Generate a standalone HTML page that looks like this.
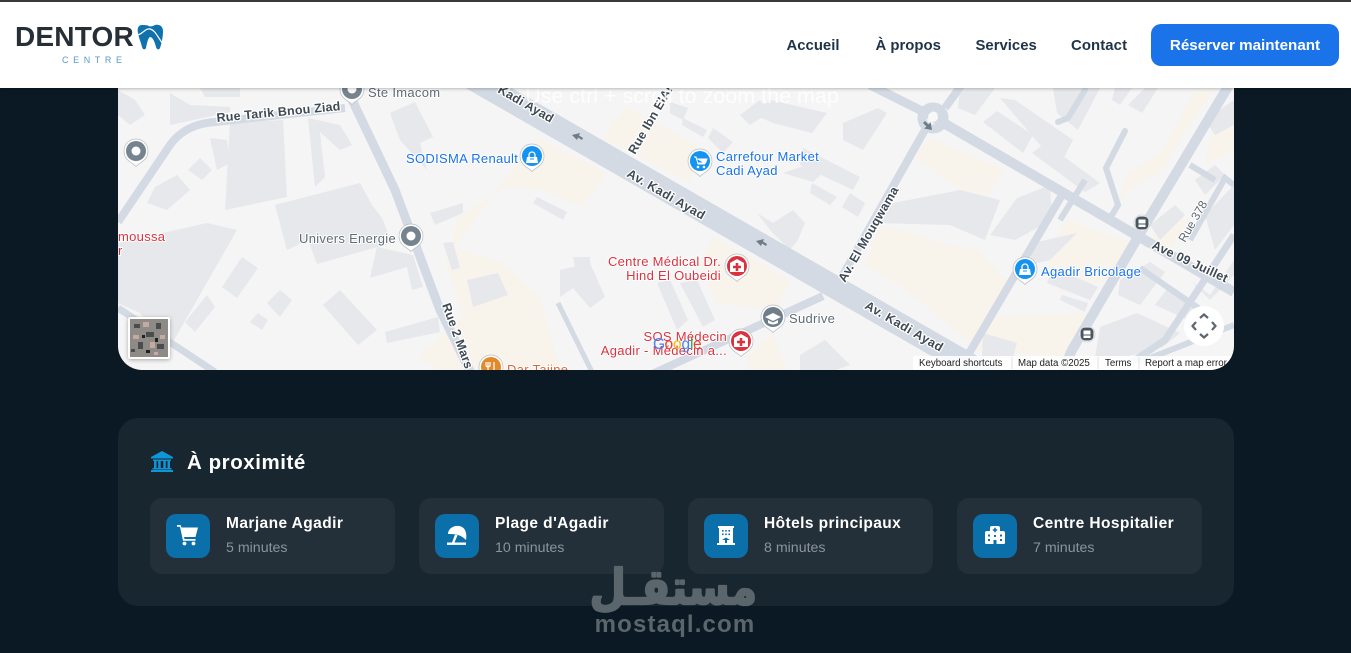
<!DOCTYPE html>
<html lang="fr"><head><meta charset="utf-8"><title>Dentor Centre</title>
<style>
*{box-sizing:border-box;margin:0;padding:0}
html,body{width:1351px;height:653px;overflow:hidden;background:#0a1923;font-family:"Liberation Sans",sans-serif}
.abs{position:absolute}
header{position:absolute;left:0;top:0;width:1351px;height:88px;background:#fff;border-top:2px solid #3a3a3a;box-shadow:0 1px 3px rgba(0,0,0,.25);z-index:5}
.nav{position:absolute;top:35.5px;font-size:14.9px;font-weight:700;color:#1e3448;white-space:nowrap;line-height:17px;height:17px;margin-top:0}
.btn{position:absolute;top:22px;width:188px;height:42px;background:#1a73e8;border-radius:10px;color:#fff;font-size:15.2px;font-weight:700;text-align:center;line-height:44px}
#map{position:absolute;left:118px;top:60px;width:1116px;height:310px;border-radius:0 0 24px 24px;overflow:hidden;background:#f5f5f5}
#map svg{position:absolute;left:0;top:0}
.card{position:absolute;left:118px;top:418px;width:1116px;height:188px;background:#17262f;border-radius:20px}
.item{position:absolute;top:498px;width:245px;height:76px;background:#232f39;border-radius:12px}
.ib{position:absolute;left:16px;top:16px;width:44px;height:44px;background:#0b6fa9;border-radius:10px}
.ib svg{position:absolute;left:0;top:-1.5px}
.t{position:absolute;left:76px;top:17px;color:#fff;font-size:15.5px;font-weight:700;white-space:nowrap;letter-spacing:.42px}
.s{position:absolute;left:76px;top:42px;color:#8b949b;font-size:14.2px;white-space:nowrap}
.h{position:absolute;left:187px;top:451px;color:#fff;font-size:20.5px;font-weight:700;white-space:nowrap;letter-spacing:.55px}
.mark{position:absolute;color:#5b666c;white-space:nowrap;text-align:center}
</style></head><body>

<div id="map">
<svg width="1116" height="310" viewBox="118 60 1116 310" font-family="Liberation Sans, sans-serif">
<!-- beige zones -->
<g fill="#f8f4ec">
<polygon points="537,137 607,173 583,207 543,190 507,187 457,217 452,247 502,263 540,297 560,370 440,370 418,357 463,317 445,260"/>
<polygon points="627,107 700,147 690,182 640,157 603,140 613,122"/>
<polygon points="713,237 790,280 777,310 717,303 700,265"/>
<polygon points="747,357 773,333 787,370 750,370"/>
<polygon points="915,157 930,138 1005,170 980,203"/>
<polygon points="880,225 920,235 950,245 978,250 1013,287 970,343 900,285 865,265"/>
<polygon points="1067,220 1133,243 1107,280 1060,293 1045,255"/>
<polygon points="993,317 1090,313 1067,357 973,350"/>
<polygon points="1193,93 1215,88 1180,140 1163,170 1130,190 1117,205 1127,175 1163,150"/>
<polygon points="1212,130 1234,125 1234,150 1205,165"/>
<polygon points="1165,215 1190,220 1170,250 1150,240"/>
</g>
<!-- buildings -->
<g fill="#e6e8ec">
<polygon points="118,243 207,223 237,230 170,347 140,313 118,303"/>
<polygon points="242,257 258,268 237,298 222,287"/>
<polygon points="207,295 215,307 195,332 185,322"/>
<polygon points="340,290 377,330 358,345 323,305"/>
<polygon points="385,332 438,317 440,332 387,343"/>
<polygon points="275,205 360,183 372,205 382,218 392,243 317,264 308,240 287,250"/>
<polygon points="467,280 498,273 508,295 473,307"/>
<polygon points="267,303 280,290 292,300 280,317"/>
<polygon points="258,313 268,320 262,330 250,322"/>
<polygon points="443,243 453,242 460,268 452,270"/>
<polygon points="377,247 413,255 423,287 412,290 407,267 370,278"/>
<polygon points="430,213 463,203 463,213 435,225"/>
<polygon points="230,123 283,120 287,197 225,210"/>
<polygon points="308,118 340,125 352,145 340,150 320,132 325,177 315,187"/>
<polygon points="390,113 415,102 433,137 420,143 427,170 400,140"/>
<polygon points="155,187 177,175 190,190 167,210 147,203"/>
<polygon points="188,170 200,158 212,170 202,180"/>
<polygon points="210,138 227,140 230,163 217,170"/>
<polygon points="118,90 135,100 145,115 130,125 118,115"/>
<polygon points="170,93 190,105 230,107 230,112 170,125"/>
<polygon points="200,88 240,88 240,97 205,97"/>
<polygon points="560,270 590,263 605,297 590,308 573,288 560,297"/>
<polygon points="573,257 590,257 590,265 575,267"/>
<polygon points="657,283 670,280 688,320 677,330"/>
<polygon points="680,283 697,280 715,320 703,327"/>
<polygon points="757,213 773,223 793,210 805,223 798,240 790,250 770,230"/>
<polygon points="877,223 893,203 960,190 1000,200 985,240 950,225"/>
<polygon points="843,123 878,108 887,113 863,150 843,140"/>
<polygon points="770,100 827,113 812,133 773,123 750,113"/>
<polygon points="683,118 707,130 703,137 682,125"/>
<polygon points="713,128 733,142 723,153 708,138"/>
<polygon points="670,102 688,108 683,120 670,113"/>
<polygon points="803,148 860,177 853,190 800,165"/>
<polygon points="783,173 813,163 823,173 813,182"/>
<polygon points="812,183 837,197 830,205 810,193"/>
<polygon points="850,193 865,203 858,217 842,207"/>
<polygon points="537,197 567,212 563,220 533,203"/>
<polygon points="740,115 760,100 770,112 750,125"/>
<polygon points="960,88 995,88 975,115 958,108"/>
<polygon points="983,122 997,111 1033,135 1023,153"/>
<polygon points="1000,98 1015,100 1073,140 1060,165 1040,145"/>
<polygon points="1032,153 1045,143 1100,183 1085,192"/>
<polygon points="1053,88 1100,88 1078,130 1057,113"/>
<polygon points="1115,88 1132,88 1120,105 1112,100"/>
<polygon points="1145,88 1158,88 1142,113 1128,105"/>
<polygon points="1017,198 1050,185 1052,220 1015,240 990,235"/>
<polygon points="1033,243 1077,233 1050,260 1030,265"/>
<polygon points="1053,267 1098,287 1090,300 1047,283"/>
<polygon points="1062,295 1088,303 1085,312 1060,300"/>
<polygon points="983,333 1017,343 1013,357 982,357"/>
<polygon points="1100,327 1137,313 1180,333 1163,347 1125,357 1095,357"/>
<polygon points="1120,280 1150,262 1165,272 1140,305 1118,295"/>
<polygon points="1170,285 1200,305 1188,320 1155,305"/>
<polygon points="1150,225 1175,205 1185,215 1160,240"/>
<polygon points="1205,120 1234,100 1234,125 1215,135"/>
<polygon points="1195,180 1215,165 1225,175 1205,195"/>
<polygon points="1205,215 1234,185 1234,225 1215,250"/>
<polygon points="1190,280 1210,295 1234,260 1234,275 1210,300"/>
<polygon points="800,355 825,340 850,365 830,372 800,372"/>
</g>
<!-- roads -->
<g fill="none" stroke="#d3dae3" stroke-linecap="butt">
<path d="M440,60 L1010,388" stroke-width="23"/>
<path d="M935,118 L1234,292" stroke-width="10"/>
<path d="M930,115 L870,85" stroke-width="9"/>
<path d="M945,108 L965,80" stroke-width="8"/>
<path d="M926,128 L840,280" stroke-width="8"/>
<circle cx="933" cy="118" r="11" stroke-width="9"/>
<path d="M345,85 L395,190 L440,310 L472,375" stroke-width="9"/>
<path d="M345,108 L215,122 Q185,124 170,145 L118,222" stroke-width="8"/>
<path d="M118,308 L215,372" stroke-width="7"/>
<path d="M1232,80 L1145,225 L1072,350 L1062,372" stroke-width="10"/>
<path d="M1062,195 L968,355" stroke-width="8"/>
<path d="M1125,131 L1106,168 L1118,205 L1112,215" stroke-width="6" stroke-linecap="round"/>
<path d="M1058,122 L1068,118 L1085,90" stroke-width="6" stroke-linecap="round"/>
<path d="M1234,235 L1165,340 L1120,370" stroke-width="7"/>
<path d="M1140,268 L1215,320" stroke-width="6"/>
<path d="M1190,165 L1215,180" stroke-width="6"/>
<path d="M1234,185 L1225,178 L1190,240" stroke-width="6"/>
<path d="M1234,325 L1140,362" stroke-width="6"/>
<path d="M823,296 L650,375" stroke-width="8"/>
<path d="M558,303 L592,372" stroke-width="5"/>
<path d="M1085,180 L1060,220" stroke-width="6"/>
</g>
<circle cx="933" cy="117" r="5" fill="#f8f8f8"/>
<!-- arrows -->
<g fill="#6f7b85">
<path d="M572,135 L580,133 L579,135.500 L583,138 L582,140 L578,137.500 L577,140Z"/>
<path d="M756,241 L764,239 L763,241.500 L767,244 L766,246 L762,243.500 L761,246Z"/>
<path d="M932,130 L924,128.500 L926.500,126.500 L923,123 L925,121 L928.500,124.500 L930.500,122Z"/>
</g>
<!-- road labels -->
<g font-size="12.500" font-weight="700" fill="#3f4a55" stroke="#fff" stroke-width="2.500" paint-order="stroke" stroke-linejoin="round" style="letter-spacing:.2px">
<text transform="translate(217,122) rotate(-5.500)">Rue Tarik Bnou Ziad</text>
<text transform="translate(497,92) rotate(30)">Kadi Ayad</text>
<text transform="translate(635,155) rotate(-60)">Rue Ibn ElAi</text>
<text transform="translate(626,176) rotate(30)" style="letter-spacing:.5px">Av. Kadi Ayad</text>
<text transform="translate(845,283) rotate(-60)">Av. El Mouqwama</text>
<text transform="translate(864,308) rotate(30)" style="letter-spacing:.5px">Av. Kadi Ayad</text>
<text transform="translate(442,305) rotate(70)">Rue 2 Mars</text>
<text transform="translate(1151,248) rotate(25)">Ave 09 Juillet</text>
</g>
<text transform="translate(1185,243) rotate(-60)" font-size="12" fill="#5f6a73" stroke="#fff" stroke-width="2" paint-order="stroke">Rue 378</text>
<!-- POI labels -->
<g font-size="13" stroke="#fff" stroke-width="2" paint-order="stroke" stroke-linejoin="round" style="letter-spacing:.3px">
<text x="368" y="97" fill="#5f6b76">Ste Imacom</text>
<text x="406" y="163" fill="#1a73e8">SODISMA Renault</text>
<text x="716" y="161" fill="#1a73e8">Carrefour Market</text>
<text x="716" y="175" fill="#1a73e8">Cadi Ayad</text>
<text x="299" y="243" fill="#5f6b76">Univers Energie</text>
<text x="118" y="241" fill="#d9333f">moussa</text>
<text x="118" y="255" fill="#d9333f">r</text>
<text x="721" y="266" text-anchor="end" fill="#d9333f">Centre Médical Dr.</text>
<text x="721" y="280" text-anchor="end" fill="#d9333f">Hind El Oubeidi</text>
<text x="789" y="323" fill="#5f6b76">Sudrive</text>
<text x="727" y="341" text-anchor="end" fill="#d9333f">SOS Médecin</text>
<text x="727" y="355" text-anchor="end" fill="#d9333f">Agadir - Médecin a...</text>
<text x="1041" y="276" fill="#1a73e8">Agadir Bricolage</text>
<text x="507" y="374" fill="#d9663a">Dar Tajine</text>
</g>
<!-- Pins -->
<defs>
<g id="pin"><path d="M0,14.500 C-3,10.500 -12,9 -12,-1 A12,12 0 1 1 12,-1 C12,9 3,10.500 0,14.500Z" fill="#fff" stroke="#b9bdc2" stroke-width=".7"/><circle cx="0" cy="-1" r="10" fill="currentColor"/></g>
<g id="bag"><path d="M-5,-1 H5 L6,5 H-6Z" fill="#fff"/><path d="M-3,-1 V-3 A3,3 0 0 1 3,-3 V-1" fill="none" stroke="#fff" stroke-width="1.300"/><path d="M-2,1 H2" stroke="currentColor" stroke-width="1"/></g>
<g id="med"><path d="M0,-7 L7,-3 V6 H-7 V-3Z" fill="#fff"/><path d="M-1.300,-3 H1.300 V-.3 H4 V2.300 H1.300 V5 H-1.300 V2.300 H-4 V-.3 H-1.300Z" fill="#d9333f"/></g>
</defs>
<g color="#76848f"><use href="#pin" x="352" y="90"/><circle cx="352" cy="89" r="4.500" fill="#fff"/>
<use href="#pin" x="136" y="152"/><circle cx="136" cy="151" r="4.500" fill="#fff"/>
<use href="#pin" x="411" y="237"/><circle cx="411" cy="236" r="4.500" fill="#fff"/></g>
<g color="#1493f0"><use href="#pin" x="532" y="157"/><use href="#bag" x="532" y="158"/>
<use href="#pin" x="700" y="162"/><path d="M694,157 H696 L698,164 H705 M697,159 H707 L705.500,163 H698" fill="#fff" stroke="#fff" stroke-width="1"/><circle cx="698" cy="167" r="1.300" fill="#fff"/><circle cx="704" cy="167" r="1.300" fill="#fff"/>
<use href="#pin" x="1025" y="270"/><use href="#bag" x="1025" y="270"/></g>
<g color="#d9333f"><use href="#pin" x="737" y="267"/><use href="#med" x="737" y="266"/>
<use href="#pin" x="741" y="342"/><use href="#med" x="741" y="341"/></g>
<g color="#6e7e8b"><use href="#pin" x="773" y="318"/><path d="M765,317 L773,313 L781,317 L773,321Z M768,320 V323 Q773,326 778,323 V320 L773,322.500Z" fill="#fff"/></g>
<g color="#e08a2c"><use href="#pin" x="491" y="368"/><path d="M488,362 V372 M486,362 V366 Q488,368 490,366 V362 M494,362 V372" stroke="#fff" stroke-width="1.200" fill="none"/></g>
<!-- transit -->
<g>
<circle cx="1142" cy="223" r="8" fill="#fff" stroke="#d5d8dc"/><rect x="1135.500" y="216.500" width="13" height="13" rx="4.500" fill="#4a5661"/><rect x="1138.500" y="219.500" width="7" height="4" fill="#fff"/><rect x="1138.500" y="224.500" width="7" height="2.500" fill="#fff"/>
<circle cx="1087" cy="334" r="8" fill="#fff" stroke="#d5d8dc"/><rect x="1080.500" y="327.500" width="13" height="13" rx="4.500" fill="#4a5661"/><rect x="1083.500" y="330.500" width="7" height="4" fill="#fff"/><rect x="1083.500" y="335.500" width="7" height="2.500" fill="#fff"/>
</g>
<!-- google logo -->
<g font-size="15.500" font-weight="400">
<text x="653" y="349" fill="#4285f4">G</text><text x="664.500" y="349" fill="#ea4335">o</text><text x="673" y="349" fill="#fbbc05">o</text><text x="681.500" y="349" fill="#4285f4">g</text><text x="690" y="349" fill="#34a853">l</text><text x="693" y="349" fill="#ea4335">e</text>
</g>
<!-- satellite tile -->
<rect x="128" y="317" width="42" height="42" rx="2" fill="#fff" style="filter:drop-shadow(0 1px 2px rgba(0,0,0,.3))"/>
<rect x="130" y="319" width="38" height="38" fill="#8e8a85"/>
<g fill="#4b4c4f"><rect x="134" y="324" width="6" height="4"/><rect x="146" y="332" width="8" height="5"/><rect x="138" y="342" width="5" height="7"/><rect x="156" y="323" width="5" height="6"/><rect x="157" y="344" width="7" height="5"/><rect x="131" y="349" width="4" height="3"/></g>
<g fill="#c5aaa3"><rect x="143" y="322" width="6" height="5"/><rect x="133" y="335" width="6" height="4"/><rect x="150" y="342" width="5" height="6"/><rect x="160" y="335" width="5" height="4"/><rect x="154" y="352" width="4" height="3"/></g>
<g fill="#1f2124"><rect x="142" y="335" width="3" height="3"/><rect x="155" y="338" width="3" height="4"/><rect x="146" y="350" width="4" height="3"/></g>
<!-- fullscreen -->
<circle cx="1204" cy="326" r="20" fill="#fff"/>
<g fill="none" stroke="#5f666d" stroke-width="2.200"><path d="M1200,318 L1204,314.500 L1208,318"/><path d="M1200,334 L1204,337.500 L1208,334"/><path d="M1196,322 L1192.500,326 L1196,330"/><path d="M1212,322 L1215.500,326 L1212,330"/></g>
<!-- attribution -->
<rect x="913" y="356" width="321" height="14" fill="#fff" opacity=".85"/>
<g font-size="9.700" fill="#222">
<text x="919" y="366">Keyboard shortcuts</text>
<text x="1018" y="366">Map data ©2025</text>
<text x="1105" y="366">Terms</text>
<text x="1145" y="366">Report a map error</text>
</g>
<g stroke="#e3e3e3"><path d="M1012,357V369M1098,357V369M1139,357V369"/></g>
<!-- overlay message -->
<text x="682" y="103" text-anchor="middle" font-size="21.500" fill="#fff" opacity=".85">Use ctrl + scroll to zoom the map</text>
</svg>
</div>

<header>
<div class="abs" style="left:15px;top:20px;font-size:28px;font-weight:700;color:#262f36;letter-spacing:.2px;line-height:30px;white-space:nowrap">DENTOR</div>
<svg class="abs" style="left:137px;top:22px" width="27" height="27" viewBox="0 0 27 27">
<path d="M5,1 C1,1 0,5 1,9 C2,15 4,18 5,23 C6,26 8,26 9,24 C10,19 11,14 13,13 C16,13 18,19 19,23 C20,26 22,26 23,24 C25,18 26,12 26,7 C26,2 22,0 18,1 C16,2 14,3 12,2 C10,1 7,1 5,1Z" fill="#0f72ad"/>
<path d="M0,11 C5,11 8,4 13,5 C18,6 20,12 26,20" fill="none" stroke="#fff" stroke-width="1.200"/>
</svg>
<div class="abs" style="left:62px;top:53px;font-size:9px;color:#5a9ac6;letter-spacing:4.600px;white-space:nowrap">CENTRE</div>
<div class="nav" style="left:786.500px">Accueil</div>
<div class="nav" style="left:875.500px">À propos</div>
<div class="nav" style="left:975.500px">Services</div>
<div class="nav" style="left:1071px;letter-spacing:.1px">Contact</div>
<div class="btn" style="left:1151px">Réserver maintenant</div>
</header>

<div class="card"></div>
<svg class="abs" style="left:151px;top:451px" width="22" height="21" viewBox="0 0 22 21" fill="#0f96d6">
<path d="M11,0 L22,6 V7.500 H0 V6Z"/><rect x="2" y="8.500" width="18" height="1.500"/>
<rect x="3" y="10" width="2.500" height="7"/><rect x="7.200" y="10" width="2.500" height="7"/><rect x="12.300" y="10" width="2.500" height="7"/><rect x="16.500" y="10" width="2.500" height="7"/>
<rect x="1.500" y="17" width="19" height="1.500"/><rect x="0" y="19" width="22" height="2"/>
</svg>
<div class="h">À proximité</div>

<div class="item" style="left:150px"><div class="ib">
<svg width="44" height="44" viewBox="0 0 44 44" fill="#fff"><path d="M11,12 H14.500 L15.500,14.500 H32 L29.500,24 H18 L18.500,26 H29.500 V27.800 H17 L14,13.800 H11Z"/><circle cx="18.500" cy="30.500" r="1.900"/><circle cx="27.500" cy="30.500" r="1.900"/></svg></div>
<div class="t">Marjane Agadir</div><div class="s">5 minutes</div></div>

<div class="item" style="left:419px"><div class="ib">
<svg width="44" height="44" viewBox="0 0 44 44" fill="#fff"><path d="M13,21 C13,14 22,11 27,14 C31,16 32,22 31,27 C28,24 26,23 23,22 C20,21 16,21 13,21Z"/><path d="M20,21.500 L22.500,22.300 L19.500,29.500 H17Z"/><rect x="12" y="29.500" width="19" height="2.400"/></svg></div>
<div class="t">Plage d'Agadir</div><div class="s">10 minutes</div></div>

<div class="item" style="left:688px"><div class="ib">
<svg width="44" height="44" viewBox="0 0 44 44"><path d="M14,13 H30 V15 H29 V30 H31 V32 H13 V30 H15 V15 H14Z" fill="#fff"/><g fill="#0b6fa9"><rect x="18" y="17" width="1.600" height="1.600"/><rect x="21.200" y="17" width="1.600" height="1.600"/><rect x="24.400" y="17" width="1.600" height="1.600"/><rect x="18" y="20.500" width="1.600" height="1.600"/><rect x="21.200" y="20.500" width="1.600" height="1.600"/><rect x="24.400" y="20.500" width="1.600" height="1.600"/><path d="M18,27 L22,24.500 L26,27 H23 V30 H21 V27Z"/></g></svg></div>
<div class="t">Hôtels principaux</div><div class="s">8 minutes</div></div>

<div class="item" style="left:957px"><div class="ib">
<svg width="44" height="44" viewBox="0 0 44 44"><path d="M17,15 Q17,13 19,13 H25 Q27,13 27,15 V18 H30 Q32,18 32,20 V30 Q32,31 30,31 H14 Q12,31 12,30 V20 Q12,18 14,18 H17Z" fill="#fff"/><g fill="#0b6fa9"><path d="M21.200,14.800 H22.800 V16.200 H24.200 V17.800 H22.800 V19.200 H21.200 V17.800 H19.800 V16.200 H21.200Z"/><rect x="15" y="21.500" width="2" height="2"/><rect x="15" y="26" width="2" height="2"/><rect x="27" y="21.500" width="2" height="2"/><rect x="27" y="26" width="2" height="2"/><rect x="21" y="22" width="2" height="2"/><rect x="20.500" y="27" width="3" height="4"/></g></svg></div>
<div class="t">Centre Hospitalier</div><div class="s">7 minutes</div></div>

<svg class="abs" style="left:585px;top:552px" width="180" height="64" viewBox="0 0 180 64">
<text transform="translate(172,52) scale(.93,1.080)" direction="rtl" font-family="DejaVu Sans, sans-serif" font-weight="700" font-size="45" fill="#5b666c" stroke="#5b666c" stroke-width="2" stroke-linejoin="round">مستقـل</text>
</svg>
<div class="mark" style="left:590px;top:611px;width:170px;font-size:24px;font-weight:700;letter-spacing:1.150px;line-height:28px">mostaql.com</div>
</body></html>
